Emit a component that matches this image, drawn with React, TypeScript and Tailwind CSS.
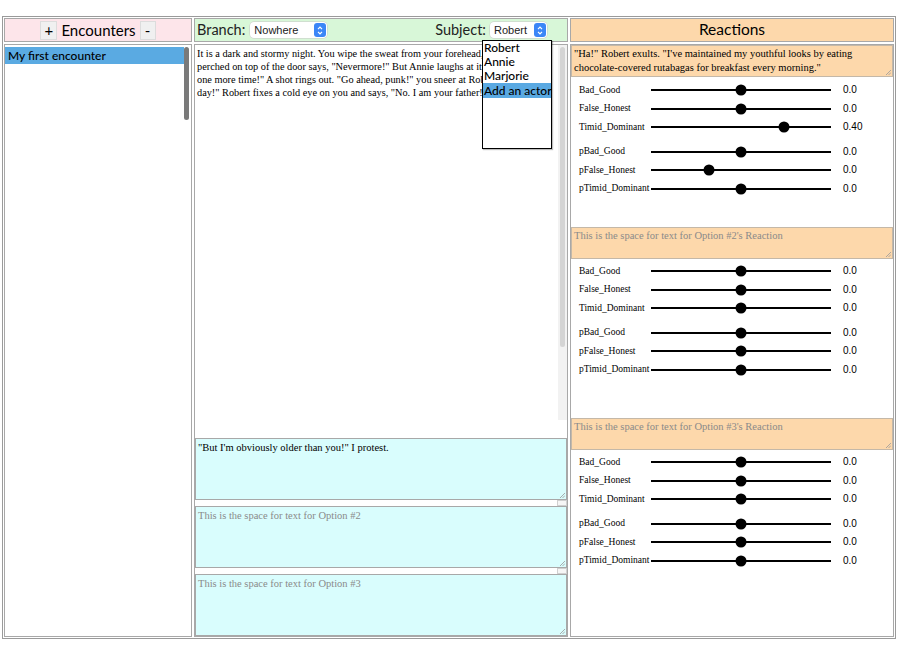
import React from "react";

const serif = "font-['Liberation_Serif',serif]";
const sans = "font-['Liberation_Sans',Arial,sans-serif]";
const head = "font-['Lato','Liberation_Sans',sans-serif]";

function Stepper() {
  return (
    <span className="flex h-[14px] w-[12px] items-center justify-center rounded-[3px] bg-[#3b86f7]">
      <svg width="6" height="9" viewBox="0 0 6 9" fill="none" stroke="white" strokeWidth="1.2">
        <path d="M1 3.2 L3 1.2 L5 3.2" />
        <path d="M1 5.8 L3 7.8 L5 5.8" />
      </svg>
    </span>
  );
}

function Select({ value, width }: { value: string; width: string }) {
  return (
    <div className={`flex h-[16px] items-center justify-between rounded-[4px] bg-white pl-[4px] pr-[1px] shadow-[0_0_0_0.5px_#c8c8c8] ${width}`}>
      <span className={`${sans} text-[11px] leading-none text-[#222]`}>{value}</span>
      <Stepper />
    </div>
  );
}

function Grip() {
  return (
    <svg className="absolute bottom-[1px] right-[1px]" width="6" height="6" viewBox="0 0 6 6" stroke="#999" strokeWidth="0.8">
      <path d="M6 1 L1 6 M6 3.5 L3.5 6" />
    </svg>
  );
}

function Slider({ label, pos, value }: { label: string; pos: number; value: string }) {
  return (
    <div className="flex h-[18.5px] items-center">
      <div className={`${serif} w-[80px] pl-[8px] text-[9.5px] leading-none text-black`}>{label}</div>
      <div className="relative h-[2px] w-[180px] bg-black">
        <div
          className="absolute top-1/2 h-[11px] w-[11px] -translate-x-1/2 -translate-y-1/2 rounded-full bg-black"
          style={{ left: `${pos}%` }}
        />
      </div>
      <div className={`${sans} pl-[12px] text-[10px] leading-none text-black`}>{value}</div>
    </div>
  );
}

function Reaction({
  text,
  placeholder,
  height,
  pad,
  pos,
}: {
  text?: string;
  placeholder?: string;
  height: string;
  pad: string;
  pos: number[];
}) {
  const labels = ["Bad_Good", "False_Honest", "Timid_Dominant", "pBad_Good", "pFalse_Honest", "pTimid_Dominant"];
  const values = ["0.0", "0.0", pos[2] === 50 ? "0.0" : "0.40", "0.0", "0.0", "0.0"];
  return (
    <div className={`flex flex-col ${height}`}>
      <div className="relative h-[32px] border border-[#c4b8a8] bg-[#fdd8ab] px-[2px] pt-[1px]">
        {text ? (
          <p className={`${serif} text-[10.5px] leading-[14px] text-black`}>{text}</p>
        ) : (
          <p className={`${serif} text-[10.5px] leading-[14px] text-[#8a8a8a]`}>{placeholder}</p>
        )}
        <Grip />
      </div>
      <div className={pad}>
        {labels.slice(0, 3).map((l, i) => (
          <Slider key={l} label={l} pos={pos[i]} value={values[i]} />
        ))}
        <div className="h-[6px]" />
        {labels.slice(3).map((l, i) => (
          <Slider key={l} label={l} pos={pos[i + 3]} value={values[i + 3]} />
        ))}
      </div>
    </div>
  );
}

function OptionBox({ text, placeholder }: { text?: string; placeholder?: string }) {
  return (
    <div className="relative h-[62px] border border-[#a8a8a8] bg-[#d9fdfd] px-[2px] pt-[2px]">
      <p className={`${serif} text-[10.5px] leading-[13px] ${text ? "text-black" : "text-[#8a8a8a]"}`}>
        {text ?? placeholder}
      </p>
      <Grip />
    </div>
  );
}

function Strip() {
  return (
    <div className="flex h-[6px] justify-end bg-white">
      <div className="h-[6px] w-[10px] border border-[#d0d0d0] bg-[#f6f6f6]" />
    </div>
  );
}

export default function App() {
  return (
    <div className="h-[654px] w-[900px] bg-white pl-[2px] pt-[16px]">
      <div className="grid h-[623px] w-[894px] grid-cols-[188px_374px_324px] grid-rows-[24px_593px] gap-[2px] border border-[#9a9a9a] p-px">
        {/* headers */}
        <div className="flex items-center justify-center gap-[4px] border border-[#a8a8a8] bg-[#fde5ea]">
          <button className={`${head} flex h-[19px] w-[17px] items-center justify-center border border-[#dcdcdc] bg-[#f0f0f0] text-[15px] leading-none text-black`}>
            +
          </button>
          <span className={`${head} text-[15px] leading-none text-black`}>Encounters</span>
          <button className={`${head} flex h-[19px] w-[16px] items-center justify-center border border-[#dcdcdc] bg-[#f0f0f0] text-[15px] leading-none text-black`}>
            -
          </button>
        </div>
        <div className="relative z-10 flex items-center justify-between border border-[#a8a8a8] bg-[#d8f7d8] pl-[2px] pr-[20px]">
          <div className="flex items-center gap-[5px]">
            <span className={`${head} text-[14.5px] leading-none text-[#222]`}>Branch:</span>
            <Select value="Nowhere" width="w-[77px]" />
          </div>
          <div className="flex items-center gap-[4px]">
            <span className={`${head} text-[14.5px] leading-none text-[#222]`}>Subject:</span>
            <Select value="Robert" width="w-[57px]" />
          </div>
          <div className="absolute left-[287px] top-[21px] h-[109px] w-[70px] border border-black bg-white shadow-[1px_1px_1px_rgba(0,0,0,0.25)]">
            {["Robert", "Annie", "Marjorie"].map((n) => (
              <div key={n} className={`${head} h-[14px] whitespace-nowrap pl-[1px] text-[12px] font-medium leading-[14px] text-black`}>
                {n}
              </div>
            ))}
            <div className={`${head} h-[15px] whitespace-nowrap bg-[#5aa9e2] pl-[1px] text-[12px] font-medium leading-[15px] text-black`}>
              Add an actor
            </div>
          </div>
        </div>
        <div className="flex items-center justify-center border border-[#a8a8a8] bg-[#fdd8ab]">
          <span className={`${head} text-[15.5px] leading-none text-black`}>Reactions</span>
        </div>

        {/* left body */}
        <div className="flex border border-[#a8a8a8] bg-white">
          <div className="flex-1 pt-[2px]">
            <div className={`${head} h-[17px] bg-[#5aaae2] pl-[3px] text-[12px] font-medium leading-[17px] text-black`}>
              My first encounter
            </div>
          </div>
          <div className="w-[7px] pt-[2px]">
            <div className="h-[73px] w-[5px] rounded-full bg-[#7a7a7a]" />
          </div>
        </div>

        {/* middle body */}
        <div className="flex flex-col border border-[#a8a8a8] bg-white">
          <div className="flex h-[393px] overflow-hidden">
            <div className={`${serif} flex-1 overflow-hidden whitespace-nowrap pl-[2px] pt-[2px] text-[10.3px] leading-[13px] text-black`}>
              <div>It is a dark and stormy night. You wipe the sweat from your forehead, and a raven</div>
              <div>perched on top of the door says, "Nevermore!" But Annie laughs at it and</div>
              <div>one more time!" A shot rings out. "Go ahead, punk!" you sneer at Robert,</div>
              <div>day!" Robert fixes a cold eye on you and says, "No. I am your father!"</div>
            </div>
            <div className="h-[375px] w-[9px] bg-[#f2f2f2] pl-[2px] pt-[2px]">
              <div className="h-[300px] w-[5px] rounded-full bg-[#d4d4d4]" />
            </div>
          </div>
          <OptionBox text={'"But I\'m obviously older than you!" I protest.'} />
          <Strip />
          <OptionBox placeholder="This is the space for text for Option #2" />
          <Strip />
          <OptionBox placeholder="This is the space for text for Option #3" />
        </div>

        {/* right body */}
        <div className="flex flex-col border border-[#a8a8a8] bg-white">
          <Reaction
            height="h-[182px]"
            pad="pt-[4px]"
            pos={[50, 50, 73.9, 50, 32.2, 50]}
            text={'"Ha!" Robert exults. "I\'ve maintained my youthful looks by eating chocolate-covered rutabagas for breakfast every morning."'}
          />
          <Reaction
            height="h-[191px]"
            pad="pt-[3px]"
            pos={[50, 50, 50, 50, 50, 50]}
            placeholder="This is the space for text for Option #2's Reaction"
          />
          <Reaction
            height="flex-1"
            pad="pt-[3px]"
            pos={[50, 50, 50, 50, 50, 50]}
            placeholder="This is the space for text for Option #3's Reaction"
          />
        </div>
      </div>
    </div>
  );
}
